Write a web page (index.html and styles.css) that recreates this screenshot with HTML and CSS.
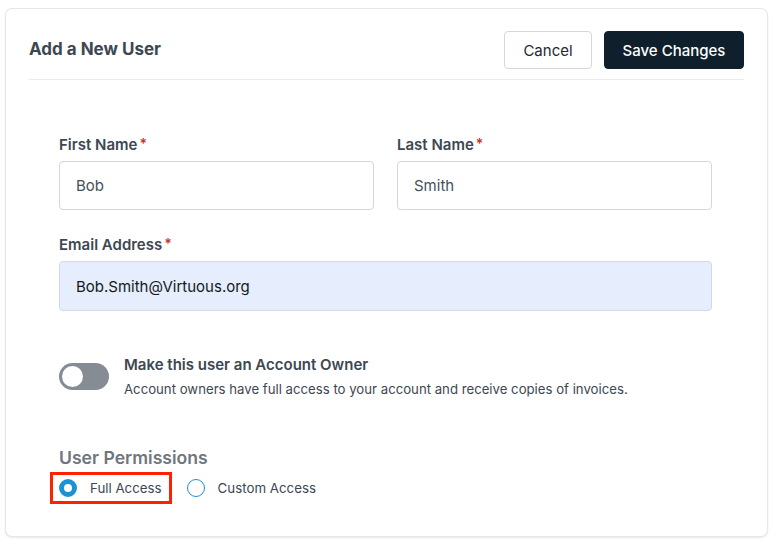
FILE: index.html
```html
<!DOCTYPE html>
<html>
<head>
<meta charset="utf-8">
<link rel="stylesheet" href="styles.css">
</head>
<body>
<div class="card">
  <div class="header">
    <h1 class="title">Add a New User</h1>
    <div class="actions">
      <button class="btn btn-secondary">Cancel</button>
      <button class="btn btn-primary">Save Changes</button>
    </div>
  </div>
  <div class="form">
    <div class="row two">
      <div class="field">
        <label class="label">First Name<span class="req">*</span></label>
        <div class="input">Bob</div>
      </div>
      <div class="field">
        <label class="label">Last Name<span class="req">*</span></label>
        <div class="input">Smith</div>
      </div>
    </div>
    <div class="field email-field">
      <label class="label">Email Address<span class="req">*</span></label>
      <div class="input input-filled">Bob.Smith@Virtuous.org</div>
    </div>
    <div class="owner">
      <div class="toggle"><span class="knob"></span></div>
      <div class="owner-text">
        <div class="owner-title">Make this user an Account Owner</div>
        <div class="owner-desc">Account owners have full access to your account and receive copies of invoices.</div>
      </div>
    </div>
    <div class="perms">
      <div class="perms-title">User Permissions</div>
      <div class="radios">
        <div class="radio-opt highlighted"><span class="radio checked"></span><span>Full Access</span></div>
        <div class="radio-opt"><span class="radio"></span><span>Custom Access</span></div>
      </div>
    </div>
  </div>
</div>
</body>
</html>
```
FILE: styles.css
```css
* { box-sizing: border-box; }
html, body { margin: 0; padding: 0; background: #fff; }
body {
  font-family: Inter, "Noto Sans", sans-serif;
  color: #3d4752;
  padding: 9px 9px 8px 6px;
}
.card {
  height: 527px;
  border-radius: 6px;
  box-shadow: 0 0 0 1px #e6e7e8, 0 1px 3px rgba(0,0,0,0.18);
  padding: 0 23px;
  background: #fff;
}
.header {
  display: flex;
  justify-content: space-between;
  align-items: center;
  padding: 22px 0 10px;
  border-bottom: 1px solid #e8eaec;
}
.title {
  margin: 0;
  font-size: 17px;
  font-weight: 700;
  color: #3d4752;
  margin-top: -3px;
}
.actions { display: flex; gap: 12px; }
.btn {
  font-family: Inter, sans-serif;
  font-size: 15px;
  height: 38px;
  border-radius: 4px;
  padding: 0 16px;
  cursor: pointer;
}
.btn-secondary {
  background: #fff;
  border: 1px solid #d5d8db;
  color: #1e2a33;
  width: 88px;
}
.btn-primary {
  background: #0f1f2b;
  border: 1px solid #0f1f2b;
  color: #fff;
  font-weight: 500;
  width: 140px;
}
.form { padding: 54px 32px 0 30px; }
.row.two { display: grid; grid-template-columns: 1fr 1fr; gap: 23px; }
.field { display: flex; flex-direction: column; gap: 6px; }
.label {
  font-size: 15px;
  font-weight: 600;
  line-height: 20px;
  color: #3d4752;
}
.req { color: #c0392b; margin-left: 2px; font-size: 14px; vertical-align: 1px; }
.input {
  height: 49px;
  border: 1px solid #d3d6da;
  border-radius: 4px;
  padding: 0 16px;
  display: flex;
  align-items: center;
  font-size: 15px;
  color: #46505a;
}
.email-field { margin-top: 24px; }
.input-filled {
  height: 50px;
  background: #e6eefd;
  border-color: #d3d9e4;
  color: #14181c;
}
.owner {
  display: flex;
  gap: 15px;
  margin-top: 44px;
}
.toggle {
  width: 50px;
  height: 27px;
  border-radius: 14px;
  background: #868c93;
  margin-top: 8px;
  position: relative;
  flex-shrink: 0;
}
.knob {
  position: absolute;
  left: 3px;
  top: 3px;
  width: 21px;
  height: 21px;
  border-radius: 50%;
  background: #fff;
}
.owner-title {
  font-size: 15px;
  font-weight: 600;
  line-height: 20px;
  color: #3d4752;
}
.owner-desc {
  font-size: 13.2px;
  line-height: 18px;
  margin-top: 5px;
  color: #3d4752;
}
.perms { margin-top: 48px; }
.perms-title {
  font-size: 17.6px;
  font-weight: 600;
  line-height: 24px;
  color: #6f767d;
}
.radios {
  display: flex;
  align-items: center;
  gap: 15px;
  margin-top: 2px;
  margin-left: -9px;
}
.radio-opt {
  display: flex;
  align-items: center;
  gap: 13px;
  font-size: 13.3px;
  color: #3d4752;
  height: 32px;
}
.highlighted {
  border: 3px solid #ff2200;
  padding: 0 7px 0 6px;
}
.radio {
  width: 18px;
  height: 18px;
  border-radius: 50%;
  border: 1.5px solid #1b92d6;
  background: #fff;
  flex-shrink: 0;
}
.radio.checked {
  border: 5.5px solid #1b92d6;
}
```
